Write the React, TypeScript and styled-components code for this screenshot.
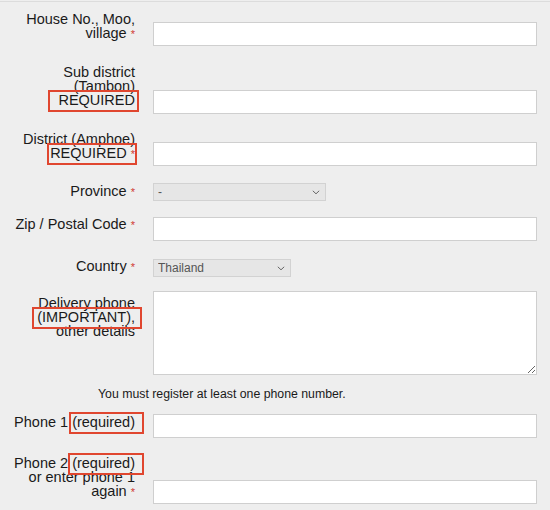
import React from "react";
import styled, { createGlobalStyle } from "styled-components";

const GlobalStyle = createGlobalStyle`
  html, body { margin: 0; padding: 0; background: #eeeeee; }
  body { font-family: "Liberation Sans", Arial, sans-serif; color: #1a1a1a; }
  * { box-sizing: border-box; }
`;

const Page = styled.div`
  margin-top: 1px;
  border-top: 1px solid #dcdcdc;
  padding: 10px 13px 0 0;
  display: flex;
  flex-direction: column;
`;

const Row = styled.div<{ $align: "start" | "end"; $mt: number }>`
  display: grid;
  grid-template-columns: 135px 384px;
  column-gap: 18px;
  align-items: ${(p) => p.$align};
  margin-top: ${(p) => p.$mt}px;
`;

const Label = styled.label<{ $pt?: number; $pb?: number }>`
  font-size: 14.5px;
  line-height: 14px;
  text-align: right;
  color: #1a1a1a;
  white-space: nowrap;
  padding-top: ${(p) => p.$pt ?? 0}px;
  padding-bottom: ${(p) => p.$pb ?? 0}px;
`;

const Req = styled.span`
  color: #d03a32;
  font-size: 11px;
  line-height: 0;
`;

const Annot = styled.span<{ $l: number; $r: number }>`
  position: relative;
  &::after {
    content: "";
    position: absolute;
    top: -2px;
    bottom: -4px;
    left: -${(p) => p.$l}px;
    right: -${(p) => p.$r}px;
    border: 2px solid #e0462f;
    pointer-events: none;
  }
`;

const TextInput = styled.input`
  display: block;
  width: 384px;
  height: 24px;
  margin: 0;
  border: 1px solid #cfcfcf;
  background: #ffffff;
  font: 13px "Liberation Sans", Arial, sans-serif;
  padding: 2px 4px;
  outline: none;
`;

const TextArea = styled.textarea`
  display: block;
  width: 384px;
  height: 84px;
  margin: 0;
  border: 1px solid #cfcfcf;
  background: #ffffff;
  font: 13px "Liberation Sans", Arial, sans-serif;
  padding: 3px 4px;
  outline: none;
`;

const SelectWrap = styled.div<{ $w: number }>`
  position: relative;
  width: ${(p) => p.$w}px;
  height: 18px;
`;

const Select = styled.select`
  appearance: none;
  -webkit-appearance: none;
  display: block;
  width: 100%;
  height: 18px;
  margin: 0;
  border: 1px solid #d2d2d2;
  border-radius: 0;
  background: #e6e6e6;
  color: #555555;
  font: 12px "Liberation Sans", Arial, sans-serif;
  padding: 0 4px;
  outline: none;
`;

const Chevron = styled.svg`
  position: absolute;
  right: 6px;
  top: 7px;
  pointer-events: none;
`;

const Note = styled.div`
  font-size: 12.3px;
  line-height: 14px;
  color: #1a1a1a;
  padding-left: 98px;
  margin-top: 12px;
`;

const Star = () => (
  <>
    {" "}
    <Req>*</Req>
  </>
);

const Dropdown = ({ w, value }: { w: number; value: string }) => (
  <SelectWrap $w={w}>
    <Select defaultValue={value}>
      <option value={value}>{value}</option>
    </Select>
    <Chevron width="8" height="5" viewBox="0 0 8 5">
      <path d="M0.8 0.8 L4 3.8 L7.2 0.8" fill="none" stroke="#666" strokeWidth="1" />
    </Chevron>
  </SelectWrap>
);

export default function App() {
  return (
    <>
      <GlobalStyle />
      <Page>
        <Row $align="end" $mt={0}>
          <Label $pb={6}>
            House No., Moo,
            <br />
            village<Star />
          </Label>
          <TextInput />
        </Row>
        <Row $align="end" $mt={19}>
          <Label $pb={7}>
            Sub district
            <br />
            (Tambon)
            <br />
            <Annot $l={10} $r={4}>REQUIRED</Annot>
          </Label>
          <TextInput />
        </Row>
        <Row $align="end" $mt={18}>
          <Label $pb={6}>
            District (Amphoe)
            <br />
            <Annot $l={3} $r={2}>
              REQUIRED<Star />
            </Annot>
          </Label>
          <TextInput />
        </Row>
        <Row $align="start" $mt={17}>
          <Label $pt={1}>
            Province<Star />
          </Label>
          <Dropdown w={173} value="-" />
        </Row>
        <Row $align="start" $mt={16}>
          <Label>
            Zip / Postal Code<Star />
          </Label>
          <TextInput />
        </Row>
        <Row $align="start" $mt={18}>
          <Label>
            Country<Star />
          </Label>
          <Dropdown w={138} value="Thailand" />
        </Row>
        <Row $align="start" $mt={14}>
          <Label $pt={5}>
            Delivery phone
            <br />
            <Annot $l={5} $r={7}>(IMPORTANT),</Annot>
            <br />
            other details
          </Label>
          <TextArea />
        </Row>
        <Note>You must register at least one phone number.</Note>
        <Row $align="start" $mt={13}>
          <Label $pt={1}>
            Phone 1 <Annot $l={3} $r={9}>(required)</Annot>
          </Label>
          <TextInput />
        </Row>
        <Row $align="end" $mt={18}>
          <Label $pb={6}>
            Phone 2 <Annot $l={4} $r={9}>(required)</Annot>
            <br />
            or enter phone 1
            <br />
            again<Star />
          </Label>
          <TextInput />
        </Row>
      </Page>
    </>
  );
}
